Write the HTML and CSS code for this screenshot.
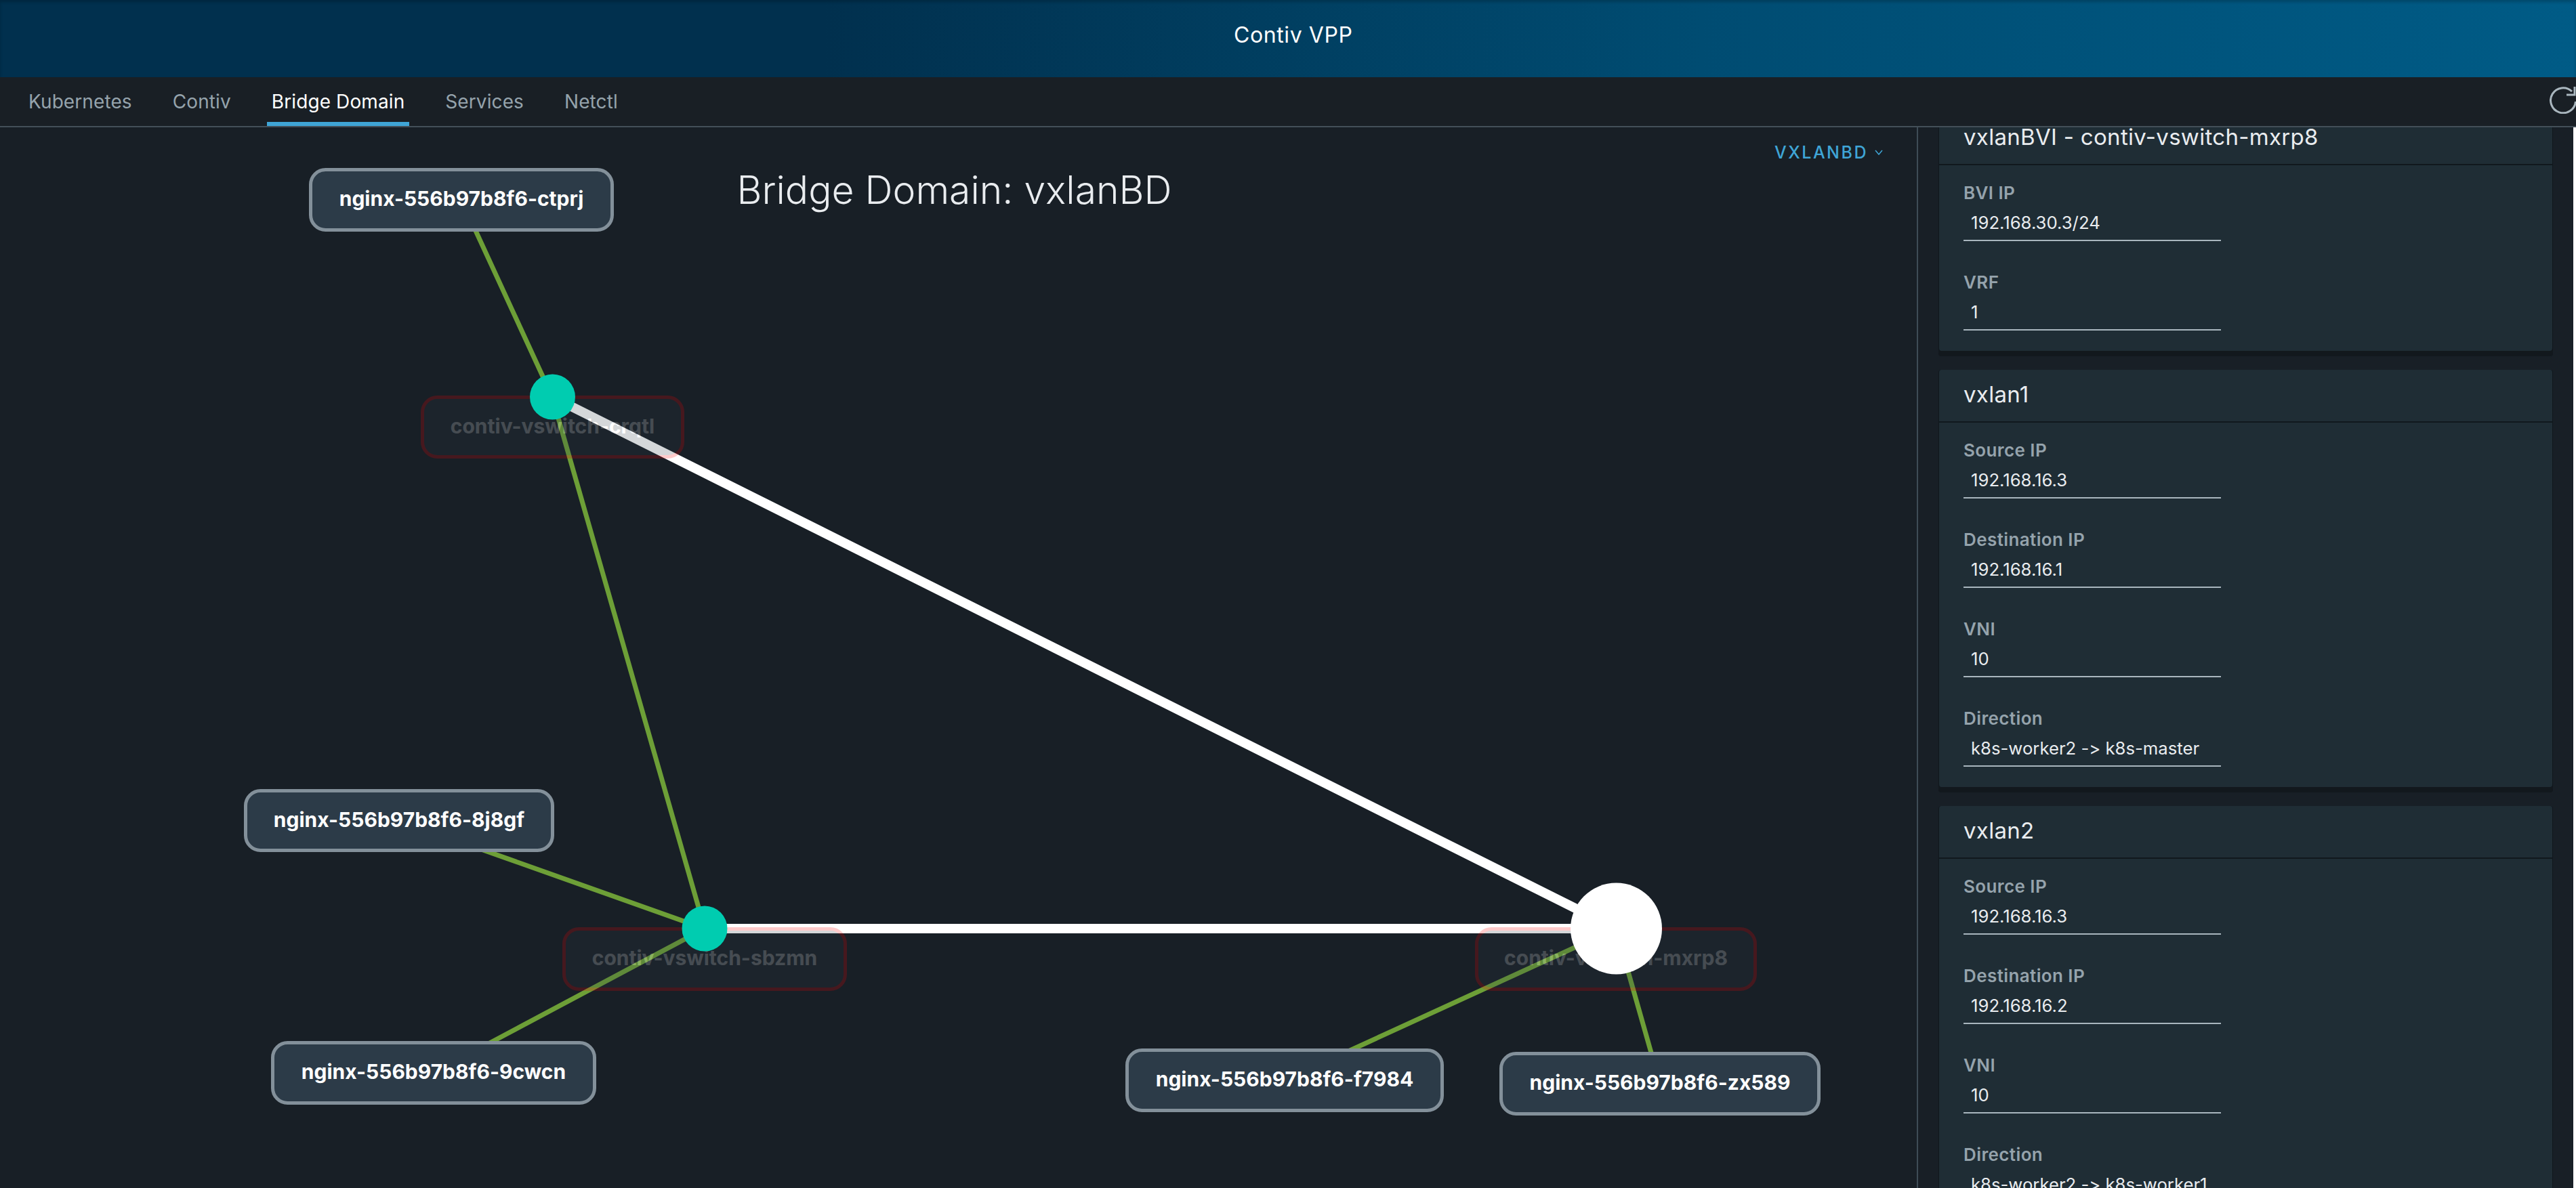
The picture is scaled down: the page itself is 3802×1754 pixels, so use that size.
FILE: index.html
```html
<!DOCTYPE html>
<html lang="en">
<head>
  <meta charset="UTF-8">
  <title>Contiv VPP</title>
  <link rel="stylesheet" href="styles.css">
</head>
<body>
  <header class="app-header">Contiv VPP</header>

  <nav class="tabs">
    <a class="tab">Kubernetes</a>
    <a class="tab">Contiv</a>
    <a class="tab active">Bridge Domain</a>
    <a class="tab">Services</a>
    <a class="tab">Netctl</a>
    <svg class="refresh" width="44" height="40" viewBox="0 0 44 40">
      <path d="M33 7A18.5 18.5 0 1 0 38.5 22M25 12H37V0"></path>
    </svg>
  </nav>

  <main class="content">
    <section class="canvas">
      <!-- viewBox keeps page coordinates, the canvas starts under the tabs -->
      <svg class="graph" viewBox="0 188 2829 1568">
        <g class="link">
          <line x1="681" y1="295" x2="815" y2="586"></line>
          <line x1="815" y1="586" x2="1040" y2="1371"></line>
          <line x1="589" y1="1211" x2="1040" y2="1371"></line>
          <line x1="640" y1="1584" x2="1040" y2="1371"></line>
          <line x1="1896" y1="1595" x2="2385" y2="1371"></line>
          <line x1="2450" y1="1600" x2="2385" y2="1371"></line>
        </g>
        <g class="tunnel">
          <line x1="815" y1="586" x2="2385" y2="1371"></line>
          <line x1="1040" y1="1371" x2="2385" y2="1371"></line>
        </g>

        <g class="vswitch">
          <rect x="623.5" y="586.5" width="384" height="88" rx="22"></rect>
          <text x="815.5" y="640">contiv-vswitch-crqtl</text>
        </g>
        <g class="vswitch">
          <rect x="832.5" y="1371.5" width="415" height="89" rx="22"></rect>
          <text x="1040" y="1425">contiv-vswitch-sbzmn</text>
        </g>
        <g class="vswitch">
          <rect x="2179.5" y="1371.5" width="411" height="89" rx="22"></rect>
          <text x="2385" y="1425">contiv-vswitch-mxrp8</text>
        </g>

        <ellipse class="bd-node" cx="815.5" cy="586" rx="33.5" ry="33.5"></ellipse>
        <ellipse class="bd-node" cx="1040" cy="1371" rx="33.5" ry="33.5"></ellipse>
        <ellipse class="bd-node selected" cx="2385.5" cy="1371" rx="67.5" ry="67.5"></ellipse>

        <g class="pod">
          <rect x="458.5" y="250.5" width="445" height="89" rx="22"></rect>
          <text x="681" y="304">nginx-556b97b8f6-ctprj</text>
        </g>
        <g class="pod">
          <rect x="362.5" y="1167.5" width="453" height="88" rx="22"></rect>
          <text x="589" y="1221">nginx-556b97b8f6-8j8gf</text>
        </g>
        <g class="pod">
          <rect x="402.5" y="1539.5" width="475" height="89" rx="22"></rect>
          <text x="640" y="1593">nginx-556b97b8f6-9cwcn</text>
        </g>
        <g class="pod">
          <rect x="1663.5" y="1550.5" width="465" height="89" rx="22"></rect>
          <text x="1896" y="1604">nginx-556b97b8f6-f7984</text>
        </g>
        <g class="pod">
          <rect x="2215.5" y="1555.5" width="469" height="89" rx="22"></rect>
          <text x="2450" y="1609">nginx-556b97b8f6-zx589</text>
        </g>
      </svg>

      <h2 class="canvas-title">Bridge Domain: vxlanBD</h2>
      <div class="dropdown">
        VXLANBD
        <svg width="12" height="8" viewBox="0 0 12 8"><path d="M1 1L6 7L11 1"></path></svg>
      </div>
    </section>

    <aside class="panel">
      <div class="card scrolled">
        <div class="card-header">vxlanBVI - contiv-vswitch-mxrp8</div>
        <div class="card-body">
          <div class="field"><label>BVI IP</label><div class="value">192.168.30.3/24</div></div>
          <div class="field"><label>VRF</label><div class="value">1</div></div>
        </div>
      </div>

      <div class="card">
        <div class="card-header">vxlan1</div>
        <div class="card-body">
          <div class="field"><label>Source IP</label><div class="value">192.168.16.3</div></div>
          <div class="field"><label>Destination IP</label><div class="value">192.168.16.1</div></div>
          <div class="field"><label>VNI</label><div class="value">10</div></div>
          <div class="field"><label>Direction</label><div class="value">k8s-worker2 -&gt; k8s-master</div></div>
        </div>
      </div>

      <div class="card">
        <div class="card-header">vxlan2</div>
        <div class="card-body">
          <div class="field"><label>Source IP</label><div class="value">192.168.16.3</div></div>
          <div class="field"><label>Destination IP</label><div class="value">192.168.16.2</div></div>
          <div class="field"><label>VNI</label><div class="value">10</div></div>
          <div class="field"><label>Direction</label><div class="value">k8s-worker2 -&gt; k8s-worker1</div></div>
        </div>
      </div>
    </aside>
  </main>
</body>
</html>
```

FILE: styles.css
```css
html, body {
  height: 100%;
}

body {
  margin: 0;
  display: flex;
  flex-direction: column;
  font-family: Inter, "Noto Sans", sans-serif;
  font-variant-ligatures: none;
  font-feature-settings: "calt" 0;
  background: #fff;
  color: #fff;
  overflow: hidden;
}

.app-header {
  flex: 0 0 114px;
  box-sizing: border-box;
  padding: 33px 0 0 1821px;
  font-size: 32px;
  line-height: 38px;
  letter-spacing: 0.6px;
  background: linear-gradient(90deg, #01304e 0%, #01304e 32%, #004c72 66%, #005b86 100%);
  box-shadow: inset 0 3px 4px rgba(0, 0, 0, 0.2);
}

.tabs {
  flex: 0 0 72px;
  box-sizing: border-box;
  display: flex;
  align-items: flex-start;
  gap: 46px;
  padding-left: 35px;
  background: #191f25;
  border-bottom: 2px solid #434f58;
}

.tab {
  box-sizing: border-box;
  height: 72px;
  padding: 19px 7px 0;
  font-size: 28px;
  line-height: 34px;
  letter-spacing: 0.1px;
  color: #95a3ac;
}

.tab.active {
  color: #fff;
  border-bottom: 6px solid #3fa5d6;
}

.refresh {
  margin: 14px -5px 0 auto;
  flex: none;
  fill: none;
  stroke: #a9b6be;
  stroke-width: 3;
}

.content {
  flex: 1;
  display: flex;
  min-height: 0;
  margin-right: 4px;
  background: #181f26;
}

.canvas {
  flex: 0 0 2829px;
  position: relative;
  overflow: hidden;
}

.graph {
  position: absolute;
  top: 0;
  left: 0;
  width: 2829px;
  height: 1568px;
}

.link line {
  stroke: #6d9f37;
  stroke-width: 7;
}

.tunnel line {
  stroke: #fff;
  stroke-width: 14;
}

.vswitch {
  opacity: 0.2;
}

.vswitch rect {
  fill: #2c3b48;
  stroke: #f00;
  stroke-width: 5;
}

.pod rect {
  fill: #2c3b48;
  stroke: #83909a;
  stroke-width: 5;
}

.graph text {
  font-size: 30px;
  font-weight: 700;
  fill: #fff;
  text-anchor: middle;
}

.bd-node {
  fill: #00ccb0;
}

.bd-node.selected {
  fill: #fff;
}

.canvas-title {
  position: relative;
  margin: 0;
  padding: 55px 12px 0 0;
  text-align: center;
  font-size: 57px;
  line-height: 76px;
  font-weight: 300;
  color: #e9ecef;
}

.dropdown {
  position: absolute;
  top: 22px;
  right: 50px;
  display: flex;
  align-items: center;
  gap: 10px;
  font-size: 25px;
  font-weight: 500;
  line-height: 30px;
  letter-spacing: 2.5px;
  color: #3fa5d6;
}

.dropdown svg {
  fill: none;
  stroke: #3fa5d6;
  stroke-width: 1.5;
}

.panel {
  flex: 1;
  box-sizing: border-box;
  padding: 0 30px 0 30px;
  border-left: 2px solid #3e4c56;
  overflow: hidden;
}

.card {
  margin-bottom: 28px;
  background: #1f2d35;
  border: 1px solid #10171c;
  border-width: 0 1px;
  border-radius: 4px;
  box-shadow: 0 8px 0 #12181d;
}

.card.scrolled {
  margin-top: -22px;
}

.card-header {
  box-sizing: border-box;
  height: 78px;
  padding: 0 36px;
  font-size: 33px;
  line-height: 72px;
  letter-spacing: 0.3px;
  color: #e9ecef;
  border-bottom: 2px solid #11181d;
}

.card-body {
  padding: 23px 36px 30px;
}

.field {
  height: 89px;
  margin-bottom: 43px;
}

.field:last-child {
  margin-bottom: 0;
}

.field label {
  display: block;
  font-size: 26px;
  font-weight: 600;
  line-height: 36px;
  letter-spacing: 0.4px;
  color: #95a3ac;
}

.value {
  box-sizing: border-box;
  width: 380px;
  height: 53px;
  padding: 0 11px;
  font-size: 25.7px;
  line-height: 52px;
  color: #e9ecef;
  border-bottom: 2px solid #a9b6be;
}
```
